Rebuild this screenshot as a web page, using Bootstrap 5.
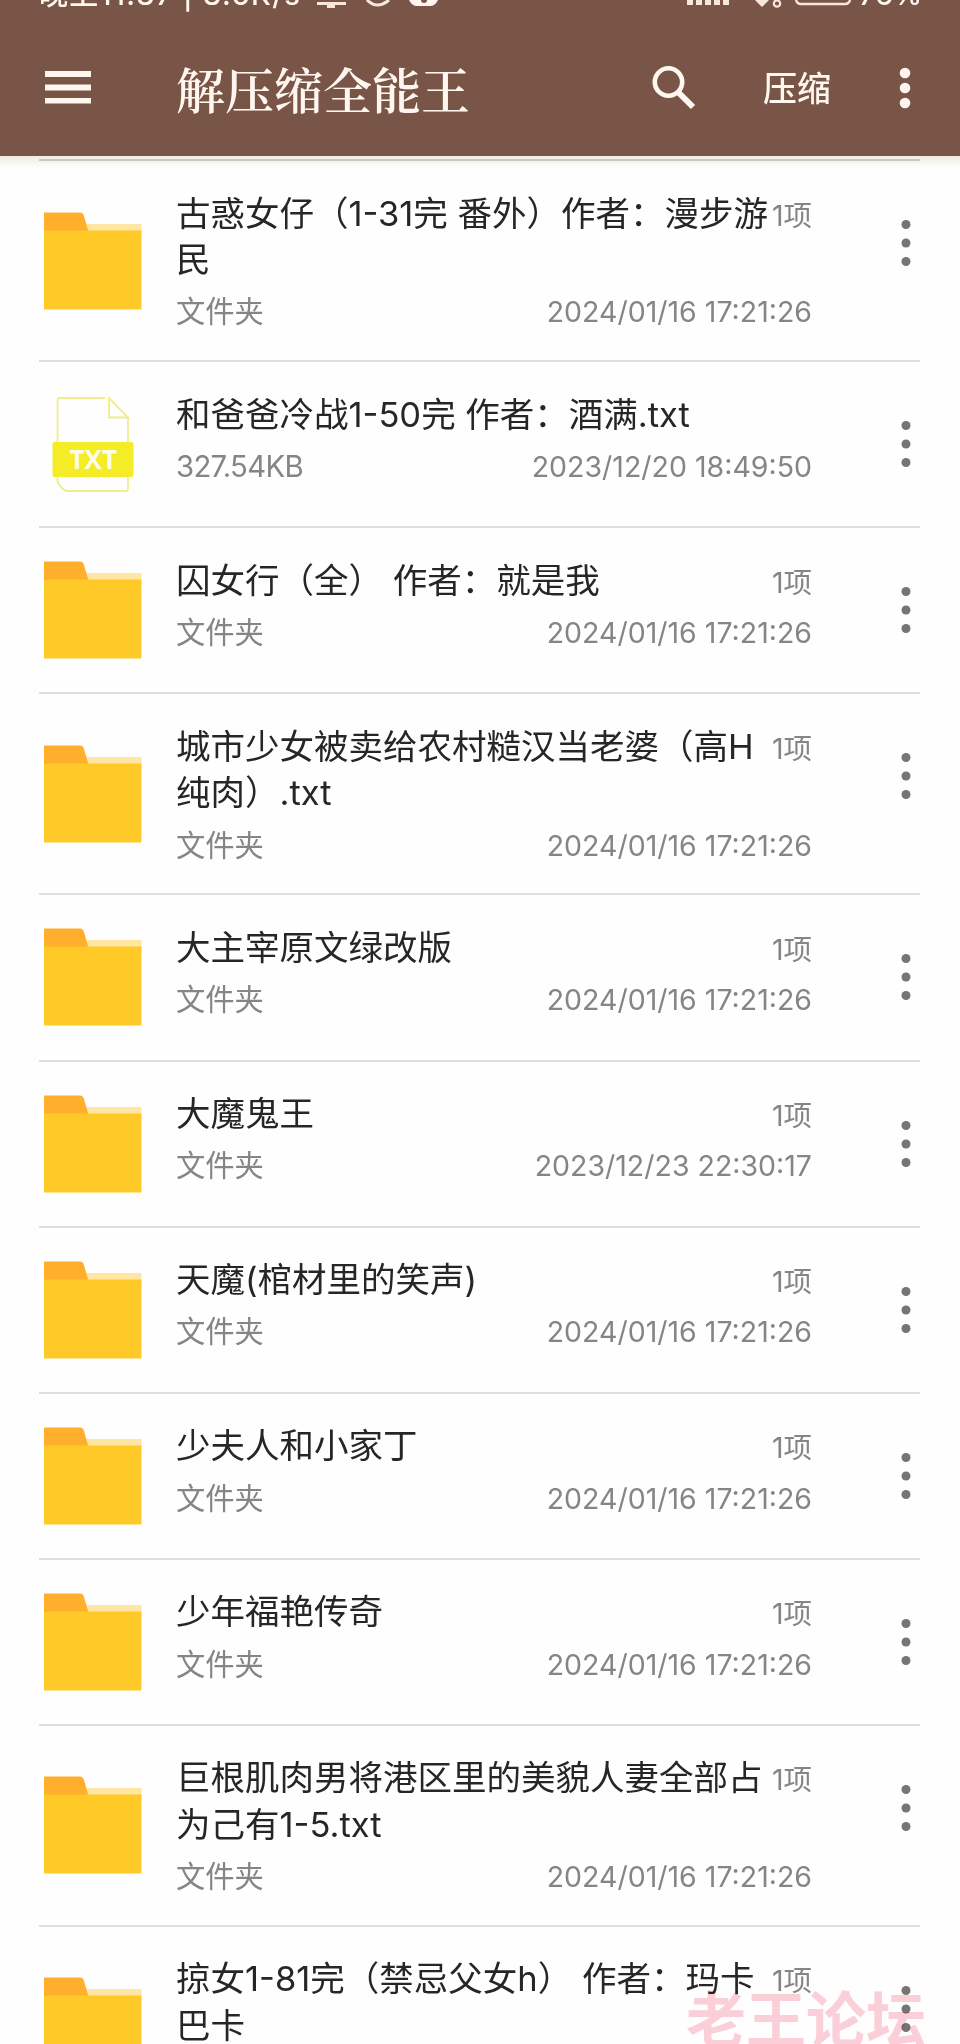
<!DOCTYPE html>
<html lang="zh-CN">
<head>
<meta charset="utf-8">
<meta name="viewport" content="width=device-width, initial-scale=1">
<title>解压缩全能王</title>
<link href="https://cdn.jsdelivr.net/npm/bootstrap@5.3.0/dist/css/bootstrap.min.css" rel="stylesheet">
<style>
body{width:960px;height:2044px;overflow:hidden;background:#fefefe;font-family:Inter,"Noto Sans CJK SC",sans-serif;position:relative}
.topbar{height:156px;background:#795548;color:#fff6ef}
.status{height:20px;overflow:hidden;padding:0 38px 0 39px}
.status-text{font-size:29px;line-height:30px;margin-top:-20px;white-space:pre;font-weight:500}
.clock{letter-spacing:1.3px;width:276px}
.bar{height:136px;padding-left:44px}
.bar-title{font-size:49px;line-height:60px;font-weight:600;font-family:"Noto Serif CJK SC","Noto Sans CJK SC",serif;margin-left:84px;width:470px;white-space:nowrap}
.bar-action{font-size:34px;line-height:40px;font-weight:500;margin-left:67px;width:68px;white-space:nowrap;padding-top:2px}
.bar-more{margin-left:68px}
.list{padding:3px 40px 0 39px;background:linear-gradient(#eeebe0,#fefefe 12px)}
.item{height:166.05px;border-top:2px solid #dedede}
.item.tall{height:201.2px}
.item:first-child{border-top-color:#cbc8be}
.thumb{width:98px;margin-left:5px;flex:none}
.info{width:636px;margin-left:34px;padding-top:29.5px;flex:none;align-self:flex-start}
.name{font-size:34.5px;line-height:46.4px;color:#262626;white-space:pre}
.meta{font-size:29.3px;line-height:40px;color:#858585;white-space:pre;padding-top:9px}
.size-label{letter-spacing:-.7px}
.count{font-size:28.5px;line-height:43px;height:46px;color:#858585;padding-top:3px;white-space:nowrap}
.date{font-size:28.5px}
.kebab{margin-left:89px;margin-top:57px;align-self:flex-start;flex:none}
.wm{position:absolute;left:686px;top:1975px;font-size:60px;line-height:90px;font-weight:700;color:#fcd0d9;white-space:nowrap;mix-blend-mode:multiply}
</style>
</head>
<body>
<svg width="0" height="0" class="position-absolute">
<symbol id="folder" viewBox="0 0 98 98"><path d="M36 12H97.500V24H36z" fill="#ffe7a3"/><path d="M0 .5H36Q39 .5 40 4L44 18V30H0z" fill="#ffaf2c"/><path d="M0 18.500H97.500V97.500H0z" fill="#ffc927"/></symbol>
<symbol id="txt" viewBox="0 0 98 98"><path d="M13.500 48V5Q13.500 3 15.500 3H61M84 22V48M65 3V22.500H84zM13.500 81V86Q15 92 22 96H82Q84 96 84 94V81" fill="none" stroke="#eeee8c" stroke-width="1.800"/><rect x="8.500" y="47" width="81" height="35" rx="2" fill="#f3ec27"/><text x="49" y="73.500" text-anchor="middle" font-family="Open Sans,sans-serif" font-weight="700" font-size="26" fill="#fffde8">TXT</text></symbol>
<symbol id="dots" viewBox="0 0 10 50"><g fill="#757575"><circle cx="5" cy="6.500" r="4.500"/><circle cx="5" cy="25" r="4.500"/><circle cx="5" cy="43.500" r="4.500"/></g></symbol>
</svg>
<header class="topbar d-flex flex-column">
<div class="status d-flex justify-content-between align-items-start">
<div class="d-flex align-items-start"><span class="status-text clock">晚上11:37 | 3.5K/s</span>
<svg width="130" height="10" viewBox="0 0 130 10"><g fill="none" stroke="#f8e6dd" stroke-width="3"><path d="M2 3.500H31M12 6.500H20"/><path d="M52 0Q62 10 74 0"/></g><path d="M94 0Q97 6 102 6H115Q120 6 123 0z" fill="#fff6ef"/><circle cx="109" cy="0" r="3" fill="#795548"/></svg></div>
<div class="d-flex align-items-start"><svg width="172" height="10" viewBox="0 0 172 10"><path d="M0 0h6v5h-6zM9 0h6v5h-6zM18 0h6v5h-6zM27 0h6v5h-6zM36 0h6v5h-6zM68 0h14l-7 7z" fill="#f8e6dd"/><circle cx="90" cy="3.500" r="3.200" fill="none" stroke="#f8e6dd" stroke-width="2.200"/><path d="M109 0Q110 4 114 4H158Q162 4 163 0" fill="none" stroke="#f8e6dd" stroke-width="2.500"/></svg><span class="status-text">76%</span></div>
</div>
<div class="bar d-flex align-items-center">
<svg width="48" height="36" viewBox="0 0 48 36" fill="#fff6ef"><path d="M1 1H47V7H1zM1 14.500H47V20.500H1zM1 28H47V33.500H1z" /></svg>
<div class="bar-title">解压缩全能王</div>
<svg width="46" height="46" viewBox="0 0 46 46" fill="none" stroke="#fff6ef" class="ms-1"><circle cx="18.500" cy="17" r="13.700" stroke-width="4.600"/><path d="M28 27L43 42" stroke-width="6"/></svg>
<div class="bar-action">压缩</div>
<svg class="bar-more" width="12" height="44" viewBox="0 0 12 44" fill="#fff6ef"><circle cx="6" cy="7" r="5.300"/><circle cx="6" cy="22" r="5.300"/><circle cx="6" cy="37" r="5.300"/></svg>
</div>
</header>
<main class="list" id="list"></main>
<div class="wm">老王论坛</div>
<script>
const D='2024/01/16 17:21:26';
const files=[
['古惑女仔（1-31完 番外）作者：漫步游\n民',D],
['和爸爸冷战1-50完 作者：酒满.txt','2023/12/20 18:49:50','327.54KB'],
['囚女行（全） 作者：就是我',D],
['城市少女被卖给农村糙汉当老婆（高H\n纯肉）.txt',D],
['大主宰原文绿改版',D],
['大魔鬼王','2023/12/23 22:30:17'],
['天魔(棺材里的笑声)',D],
['少夫人和小家丁',D],
['少年福艳传奇',D],
['巨根肌肉男将港区里的美貌人妻全部占\n为己有1-5.txt',D],
['掠女1-81完（禁忌父女h） 作者：玛卡\n巴卡',D]];
document.getElementById('list').innerHTML=files.map(([n,d,size])=>`
<div class="item d-flex align-items-center${n.includes('\n')?' tall':''}">
<svg class="thumb" width="98" height="98"><use href="#${size?'txt':'folder'}"/></svg>
<div class="info"><div class="d-flex justify-content-between"><div class="name">${n}</div>${size?'':'<div class="count">1项</div>'}</div>
<div class="meta d-flex justify-content-between"><span class="${size?'size-label':''}">${size||'文件夹'}</span><span class="date">${d}</span></div></div>
<svg class="kebab" width="10" height="50"><use href="#dots"/></svg>
</div>`).join('');
</script>
<script src="https://cdn.jsdelivr.net/npm/bootstrap@5.3.0/dist/js/bootstrap.bundle.min.js"></script>
</body>
</html>
